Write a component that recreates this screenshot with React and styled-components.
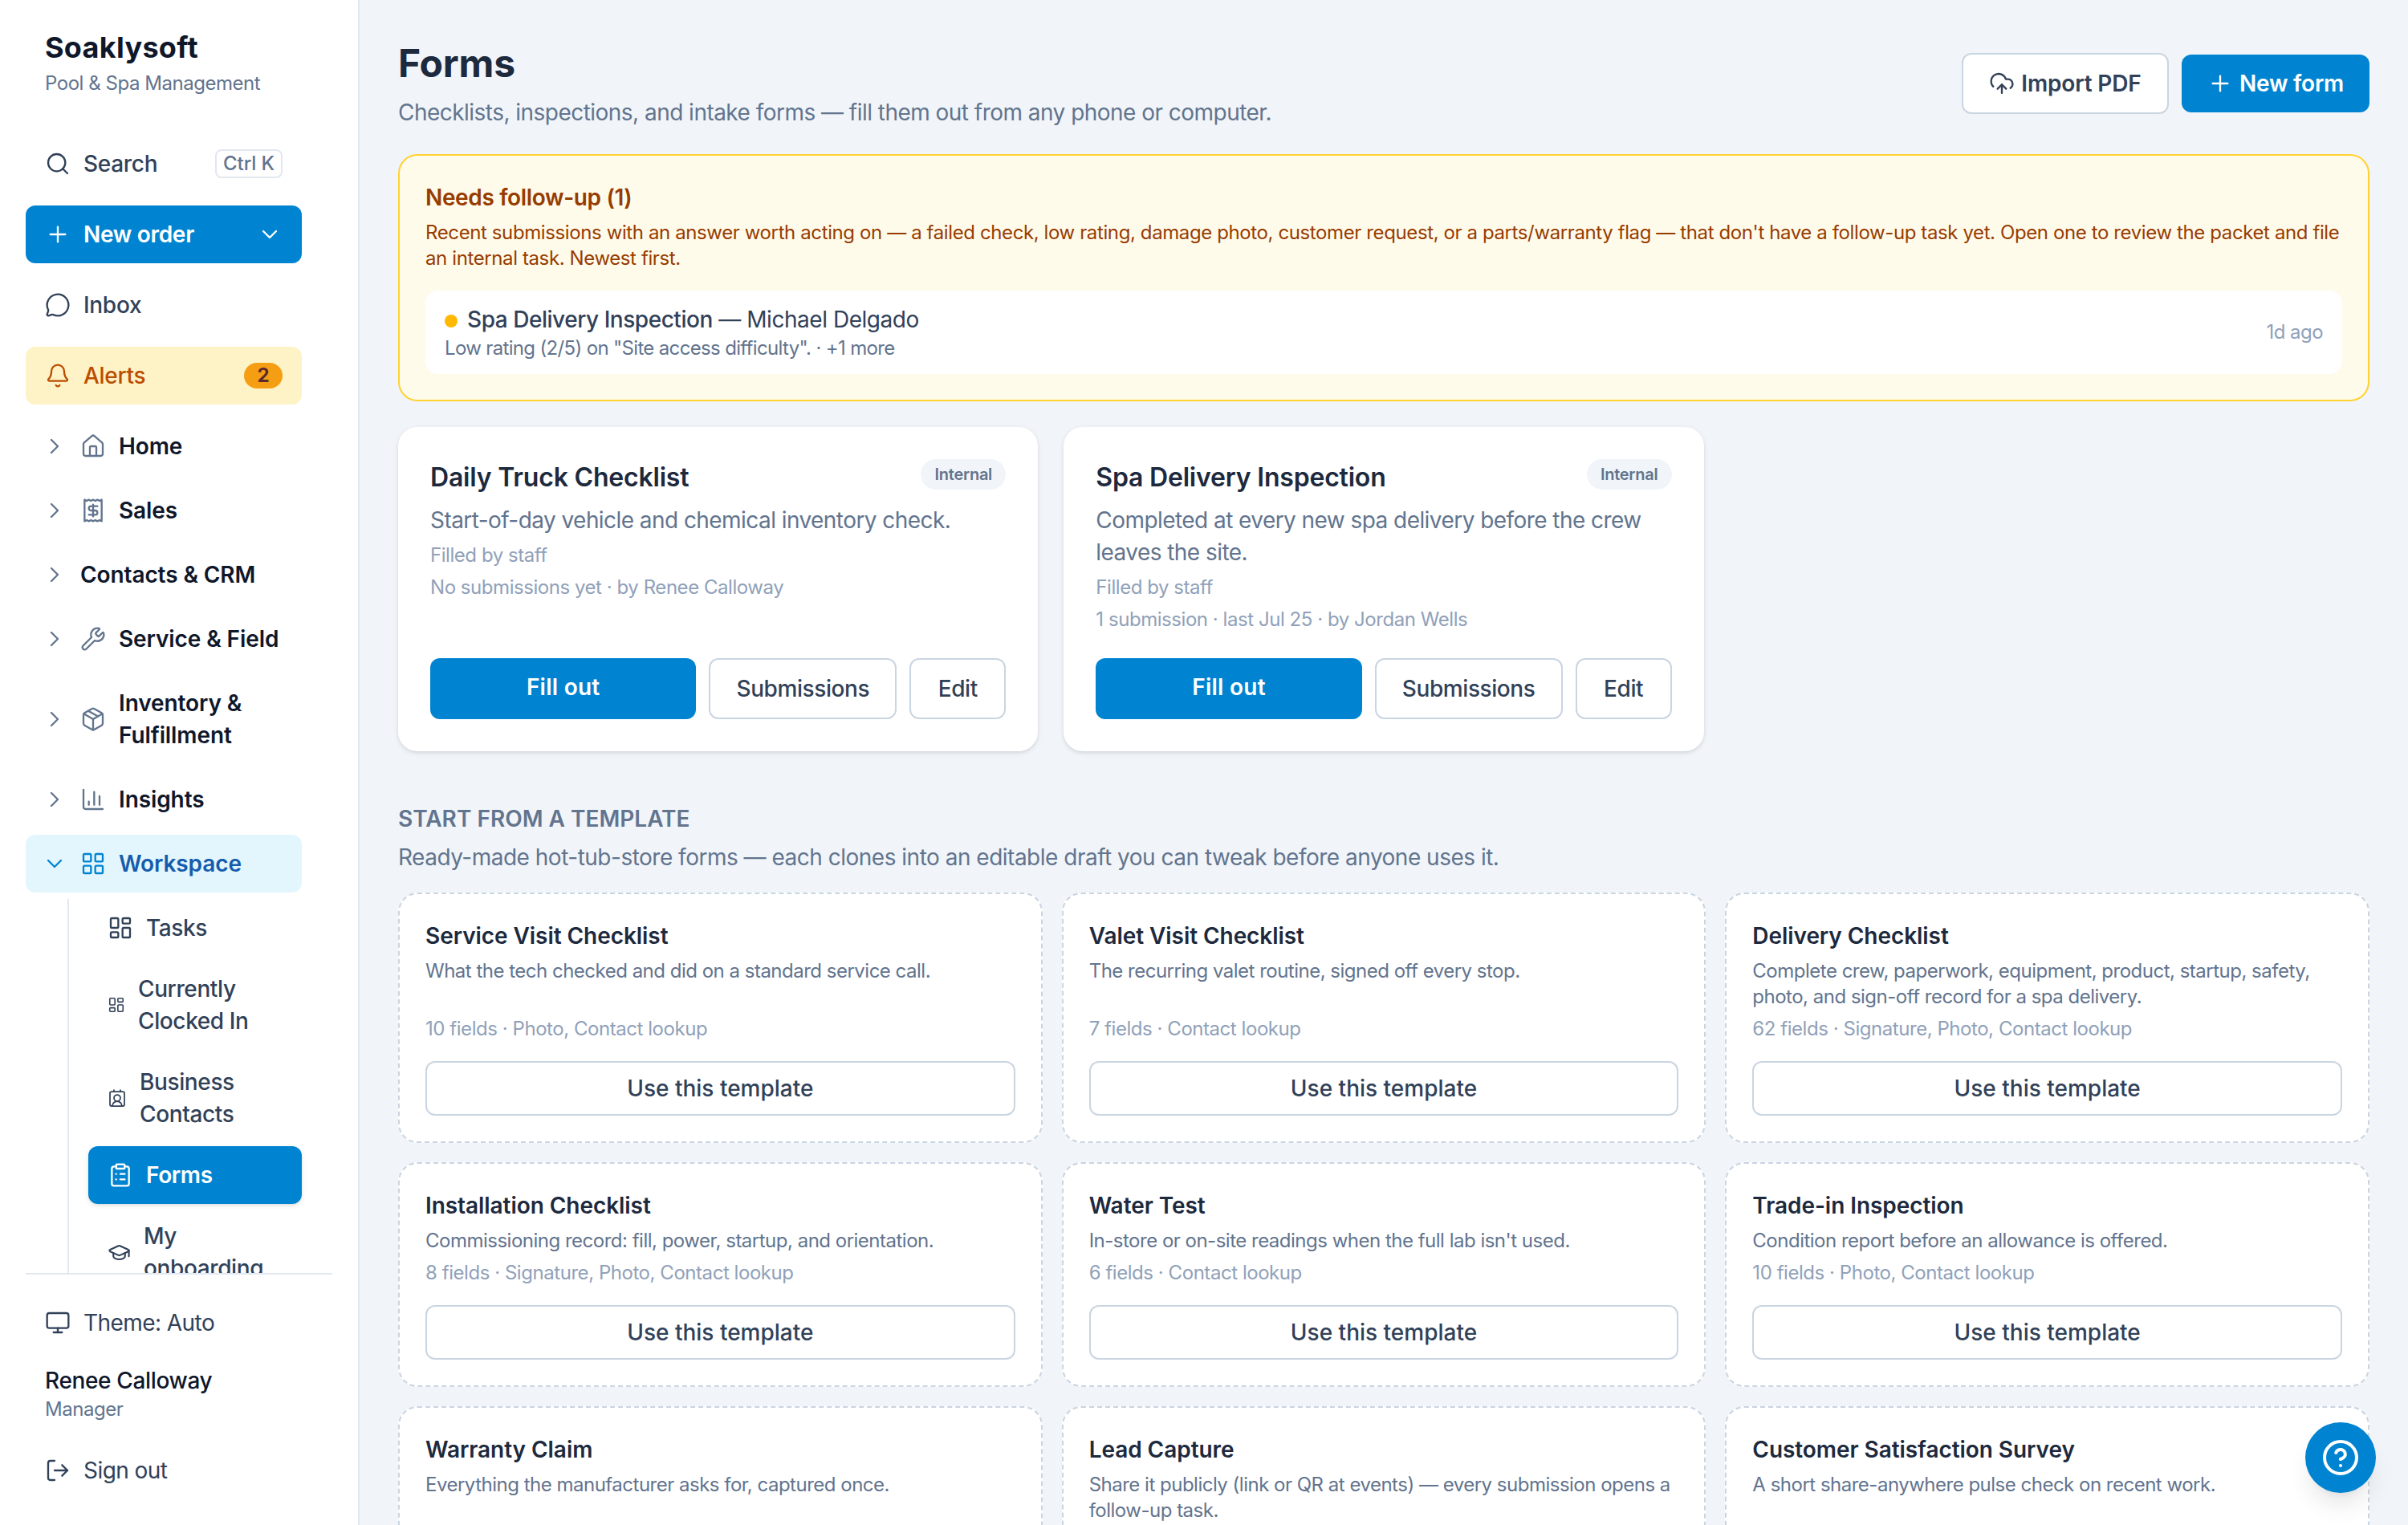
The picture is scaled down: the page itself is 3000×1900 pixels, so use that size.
import React from "react";
import styled, { createGlobalStyle, css } from "styled-components";
import {
  Bell,
  ChartColumn,
  ChevronDown,
  ChevronRight,
  CircleQuestionMark,
  ClipboardList,
  CloudUpload,
  ContactRound,
  GraduationCap,
  House,
  LayoutDashboard,
  LayoutGrid,
  LogOut,
  MessageCircle,
  Monitor,
  Package,
  Plus,
  Receipt,
  Search,
  Wrench,
} from "lucide-react";

const GlobalStyle = createGlobalStyle`
  * {
    box-sizing: border-box;
  }
  body {
    margin: 0;
    background: #f1f5f9;
    color: #1d293d;
    font-family: Inter, "Liberation Sans", sans-serif;
    font-size: 28px;
    line-height: 40px;
    letter-spacing: -0.56px;
  }
  h1, h2, h3, p {
    margin: 0;
  }
  button {
    font: inherit;
    letter-spacing: inherit;
    margin: 0;
  }
  svg {
    display: block;
  }
`;

const groups = [
  { label: "Home", icon: House },
  { label: "Sales", icon: Receipt },
  { label: "Contacts & CRM" },
  { label: "Service & Field", icon: Wrench },
  { label: "Inventory & Fulfillment", icon: Package },
  { label: "Insights", icon: ChartColumn },
  { label: "Workspace", icon: LayoutGrid, open: true },
];

const subItems = [
  { label: "Tasks", icon: LayoutDashboard, size: 32 },
  { label: "Currently Clocked In", icon: LayoutDashboard, size: 22 },
  { label: "Business Contacts", icon: ContactRound, size: 24 },
  { label: "Forms", icon: ClipboardList, size: 32, active: true },
  { label: "My onboarding", icon: GraduationCap, size: 29 },
];

const forms = [
  {
    title: "Daily Truck Checklist",
    text: "Start-of-day vehicle and chemical inventory check.",
    meta: "No submissions yet · by Renee Calloway",
  },
  {
    title: "Spa Delivery Inspection",
    text: "Completed at every new spa delivery before the crew leaves the site.",
    meta: "1 submission · last Jul 25 · by Jordan Wells",
  },
];

const templates = [
  {
    title: "Service Visit Checklist",
    text: "What the tech checked and did on a standard service call.",
    meta: "10 fields · Photo, Contact lookup",
  },
  {
    title: "Valet Visit Checklist",
    text: "The recurring valet routine, signed off every stop.",
    meta: "7 fields · Contact lookup",
  },
  {
    title: "Delivery Checklist",
    text: "Complete crew, paperwork, equipment, product, startup, safety, photo, and sign-off record for a spa delivery.",
    meta: "62 fields · Signature, Photo, Contact lookup",
  },
  {
    title: "Installation Checklist",
    text: "Commissioning record: fill, power, startup, and orientation.",
    meta: "8 fields · Signature, Photo, Contact lookup",
  },
  {
    title: "Water Test",
    text: "In-store or on-site readings when the full lab isn't used.",
    meta: "6 fields · Contact lookup",
  },
  {
    title: "Trade-in Inspection",
    text: "Condition report before an allowance is offered.",
    meta: "10 fields · Photo, Contact lookup",
  },
  {
    title: "Warranty Claim",
    text: "Everything the manufacturer asks for, captured once.",
    meta: "12 fields · Photo, Contact lookup",
  },
  {
    title: "Lead Capture",
    text: "Share it publicly (link or QR at events) — every submission opens a follow-up task.",
    meta: "6 fields · Contact lookup",
  },
  {
    title: "Customer Satisfaction Survey",
    text: "A short share-anywhere pulse check on recent work.",
    meta: "5 fields",
  },
];

function Sidebar() {
  return (
    <Aside>
      <Brand>
        <BrandName>Soaklysoft</BrandName>
        <Small>Pool &amp; Spa Management</Small>
      </Brand>

      <Nav>
        <QuickLinks>
          <NavRow>
            <Search size={32} strokeWidth={1.75} />
            <Grow>Search</Grow>
            <Kbd>Ctrl K</Kbd>
          </NavRow>
          <NavRow $variant="primary">
            <Plus size={32} strokeWidth={1.75} />
            <Grow>New order</Grow>
            <ChevronDown size={32} strokeWidth={1.75} />
          </NavRow>
          <NavRow>
            <MessageCircle size={32} strokeWidth={1.75} />
            <Grow>Inbox</Grow>
          </NavRow>
          <NavRow $variant="alert">
            <Bell size={32} strokeWidth={1.75} />
            <Grow>Alerts</Grow>
            <Count>2</Count>
          </NavRow>
        </QuickLinks>

        <Groups>
          {groups.map(({ label, icon: Icon, open }) => (
            <GroupRow key={label} $open={open}>
              {open ? (
                <ChevronDown size={32} strokeWidth={1.75} />
              ) : (
                <ChevronRight size={32} strokeWidth={1.75} />
              )}
              {Icon && <Icon size={32} strokeWidth={1.75} />}
              <span>{label}</span>
            </GroupRow>
          ))}
        </Groups>

        <SubList>
          {subItems.map(({ label, icon: Icon, size, active }) => (
            <SubRow key={label} $active={active}>
              <Icon size={size} strokeWidth={1.75} />
              <span>{label}</span>
            </SubRow>
          ))}
        </SubList>
      </Nav>

      <Footer>
        <NavRow $regular>
          <Monitor size={32} strokeWidth={1.75} />
          <Grow>Theme: Auto</Grow>
        </NavRow>
        <User>
          <UserName>Renee Calloway</UserName>
          <Small>Manager</Small>
        </User>
        <NavRow $regular>
          <LogOut size={32} strokeWidth={1.75} />
          <Grow>Sign out</Grow>
        </NavRow>
      </Footer>
    </Aside>
  );
}

function App() {
  return (
    <Page>
      <GlobalStyle />
      <Sidebar />
      <Main>
        <Header>
          <div>
            <Title>Forms</Title>
            <Lead>
              Checklists, inspections, and intake forms — fill them out from any
              phone or computer.
            </Lead>
          </div>
          <Actions>
            <ImportButton $width={258}>
              <CloudUpload size={32} strokeWidth={1.75} />
              Import PDF
            </ImportButton>
            <PrimaryButton>
              <Plus size={32} strokeWidth={1.75} />
              New form
            </PrimaryButton>
          </Actions>
        </Header>

        <FollowUp>
          <FollowTitle>Needs follow-up (1)</FollowTitle>
          <FollowText>
            Recent submissions with an answer worth acting on — a failed check,
            low rating, damage photo, customer request, or a parts/warranty flag
            — that don't have a follow-up task yet. Open one to review the
            packet and file an internal task. Newest first.
          </FollowText>
          <FollowItem>
            <div>
              <ItemTitle>
                <Dot />
                <span>
                  <b>Spa Delivery Inspection</b> — Michael Delgado
                </span>
              </ItemTitle>
              <ItemReason>
                Low rating (2/5) on "Site access difficulty". · +1 more
              </ItemReason>
            </div>
            <Meta>1d ago</Meta>
          </FollowItem>
        </FollowUp>

        <FormGrid>
          {forms.map((form) => (
            <FormCard key={form.title}>
              <CardTop>
                <CardTitle>{form.title}</CardTitle>
                <Tag>Internal</Tag>
              </CardTop>
              <CardText>{form.text}</CardText>
              <CardMeta>Filled by staff</CardMeta>
              <CardMeta>{form.meta}</CardMeta>
              <CardButtons>
                <FillButton>Fill out</FillButton>
                <Button $width={234}>Submissions</Button>
                <Button $width={120}>Edit</Button>
              </CardButtons>
            </FormCard>
          ))}
        </FormGrid>

        <SectionTitle>Start from a template</SectionTitle>
        <SectionText>
          Ready-made hot-tub-store forms — each clones into an editable draft
          you can tweak before anyone uses it.
        </SectionText>
        <TemplateGrid>
          {templates.map((item) => (
            <TemplateCard key={item.title}>
              <TemplateTitle>{item.title}</TemplateTitle>
              <TemplateText>{item.text}</TemplateText>
              <CardMeta>{item.meta}</CardMeta>
              <TemplateButton>Use this template</TemplateButton>
            </TemplateCard>
          ))}
        </TemplateGrid>
      </Main>
      <HelpButton>
        <CircleQuestionMark size={48} strokeWidth={2} />
      </HelpButton>
    </Page>
  );
}

const Page = styled.div`
  display: flex;
  width: 3000px;
  height: 1900px;
  overflow: hidden;
`;

const Aside = styled.aside`
  display: flex;
  flex-direction: column;
  flex: none;
  width: 448px;
  height: 1900px;
  padding: 32px;
  border-right: 2px solid #e2e8f0;
  background: #ffffff;
`;

const Brand = styled.div`
  height: 136px;
  flex: none;
  padding-left: 24px;
`;

const BrandName = styled.div`
  color: #0f172b;
  font-size: 36px;
  font-weight: 700;
  line-height: 54px;
  letter-spacing: 0.3px;
  margin-bottom: 2px;
`;

const Small = styled.div`
  color: #62748e;
  font-size: 24px;
  line-height: 32px;
  letter-spacing: -0.46px;
`;

const Nav = styled.nav`
  flex: 1;
  min-height: 0;
  padding-right: 38px;
  overflow: hidden;
`;

const QuickLinks = styled.div`
  display: flex;
  flex-direction: column;
  gap: 16px;
`;

const NavRow = styled.div`
  display: flex;
  align-items: center;
  gap: 16px;
  height: 72px;
  padding: 0 24px;
  border-radius: 12px;
  color: #314158;
  font-weight: ${(p) => (p.$regular ? 400 : 500)};
  letter-spacing: ${(p) => (p.$regular ? "-0.56px" : "-0.3px")};

  ${(p) =>
    p.$variant === "primary" &&
    css`
      background: #0084d1;
      color: #ffffff;
      font-weight: 600;
    `}

  ${(p) =>
    p.$variant === "alert" &&
    css`
      background: #fef3c6;
      color: #bb4d00;
    `}
`;

const Grow = styled.span`
  flex: 1;
`;

const Kbd = styled.span`
  display: flex;
  align-items: center;
  justify-content: center;
  width: 84px;
  height: 36px;
  border: 2px solid #e2e8f0;
  border-radius: 8px;
  color: #62748e;
  font-size: 24px;
  font-weight: 500;
  letter-spacing: -0.1px;
`;

const Count = styled.span`
  width: 48px;
  border-radius: 16px;
  background: #f59e14;
  color: #5c2a2e;
  font-size: 24px;
  font-weight: 700;
  line-height: 32px;
  text-align: center;
`;

const Groups = styled.div`
  display: flex;
  flex-direction: column;
  gap: 8px;
  margin-top: 16px;
`;

const GroupRow = styled.div`
  display: flex;
  align-items: center;
  gap: 16px;
  padding: 16px 20px;
  border-radius: 12px;
  background: ${(p) => (p.$open ? "#e4f6fd" : "transparent")};
  color: ${(p) => (p.$open ? "#155dac" : "#0f172b")};
  font-weight: 600;
  letter-spacing: -0.1px;

  svg {
    flex: none;
    color: ${(p) => (p.$open ? "#0084d1" : "#62748e")};
  }
`;

const SubList = styled.div`
  display: flex;
  flex-direction: column;
  gap: 4px;
  margin: 8px 0 0 52px;
  padding-left: 24px;
  border-left: 2px solid #e2e8f0;
`;

const SubRow = styled.div`
  display: flex;
  align-items: center;
  gap: 16px;
  padding: 16px 24px;
  border-radius: 12px;
  color: ${(p) => (p.$active ? "#ffffff" : "#314158")};
  background: ${(p) => (p.$active ? "#0084d1" : "transparent")};
  box-shadow: ${(p) =>
    p.$active ? "0 2px 6px rgba(0, 0, 0, 0.1), 0 2px 4px -2px rgba(0, 0, 0, 0.1)" : "none"};
  font-weight: ${(p) => (p.$active ? 600 : 500)};
  letter-spacing: -0.38px;

  svg {
    flex: none;
  }
`;

const Footer = styled.div`
  flex: none;
  padding-top: 24px;
  border-top: 2px solid #e2e8f0;
`;

const User = styled.div`
  padding: 16px 24px 24px;
`;

const UserName = styled.div`
  color: #0f172b;
  font-weight: 500;
  letter-spacing: -0.35px;
`;

const Main = styled.main`
  flex: 1;
  min-width: 0;
  padding: 48px;
`;

const Header = styled.header`
  display: flex;
  justify-content: space-between;
  height: 144px;
`;

const Title = styled.h1`
  padding-bottom: 2px;
  font-size: 48px;
  font-weight: 700;
  line-height: 62px;
  letter-spacing: -0.2px;
`;

const Lead = styled.p`
  margin-top: 8px;
  color: #62748e;
  letter-spacing: -0.53px;
`;

const Actions = styled.div`
  display: flex;
  align-items: center;
  align-self: flex-start;
  gap: 16px;
  height: 112px;
`;

const buttonBase = css`
  display: flex;
  align-items: center;
  justify-content: center;
  gap: 8px;
  padding: 0;
  border-radius: 12px;
  white-space: nowrap;
`;

const Button = styled.button`
  ${buttonBase}
  width: ${(p) => p.$width}px;
  height: 76px;
  border: 2px solid #cad5e2;
  background: #ffffff;
  color: #314158;
  font-weight: 500;
  letter-spacing: -0.42px;
`;

const ImportButton = styled(Button)`
  font-weight: 600;
  letter-spacing: -0.15px;
`;

const PrimaryButton = styled.button`
  ${buttonBase}
  width: 234px;
  height: 72px;
  border: none;
  background: #0084d1;
  color: #ffffff;
  font-weight: 600;
  letter-spacing: -0.2px;
`;

const FollowUp = styled.section`
  height: 308px;
  padding: 32px;
  border: 2px solid #ffd230;
  border-radius: 24px;
  background: #fffbeb;
  color: #973c00;
`;

const FollowTitle = styled.h2`
  font-size: 28px;
  font-weight: 600;
  line-height: 40px;
  letter-spacing: -0.35px;
`;

const FollowText = styled.p`
  margin-top: 8px;
  font-size: 24px;
  line-height: 32px;
  letter-spacing: -0.39px;
`;

const FollowItem = styled.div`
  display: flex;
  align-items: center;
  justify-content: space-between;
  margin-top: 24px;
  padding: 16px 24px;
  border-radius: 16px;
  background: #ffffff;
`;

const ItemTitle = styled.div`
  display: flex;
  align-items: center;
  gap: 12px;
  color: #314158;
  letter-spacing: -0.46px;

  b {
    font-weight: 500;
  }
`;

const ItemReason = styled(Small)`
  letter-spacing: -0.66px;
`;

const Dot = styled.span`
  width: 16px;
  height: 16px;
  margin-top: 4px;
  border-radius: 50%;
  background: #ffb900;
`;

const Meta = styled.div`
  color: #90a1b9;
  font-size: 24px;
  line-height: 32px;
`;

const FormGrid = styled.div`
  display: grid;
  grid-template-columns: repeat(3, 1fr);
  gap: 32px;
  margin-top: 32px;
`;

const FormCard = styled.article`
  display: flex;
  flex-direction: column;
  height: 404px;
  padding: 40px;
  border-radius: 24px;
  background: #ffffff;
  box-shadow: 0 2px 6px rgba(0, 0, 0, 0.1), 0 2px 4px -2px rgba(0, 0, 0, 0.1);
`;

const CardTop = styled.div`
  display: flex;
  align-items: flex-start;
  justify-content: space-between;
`;

const CardTitle = styled.h2`
  padding-top: 2px;
  font-size: 32px;
  font-weight: 600;
  line-height: 42px;
  letter-spacing: -0.2px;
`;

const Tag = styled.span`
  width: 106px;
  border-radius: 19px;
  background: #f1f5f9;
  color: #62748e;
  font-size: 20px;
  font-weight: 600;
  line-height: 38px;
  letter-spacing: -0.25px;
  text-align: center;
`;

const CardText = styled.p`
  margin-top: 12px;
  color: #62748e;
`;

const CardMeta = styled.p`
  margin-top: 8px;
  color: #90a1b9;
  font-size: 24px;
  line-height: 32px;
  letter-spacing: -0.45px;
`;

const CardButtons = styled.div`
  display: flex;
  gap: 16px;
  margin-top: auto;
`;

const FillButton = styled.button`
  flex: 1;
  padding: 0 0 4px;
  border: none;
  border-radius: 12px;
  background: #0084d1;
  color: #ffffff;
  font-weight: 600;
  letter-spacing: 0.25px;
`;

const SectionTitle = styled.h2`
  margin-top: 64px;
  color: #62748e;
  font-size: 28px;
  font-weight: 600;
  line-height: 40px;
  letter-spacing: 0;
  text-transform: uppercase;
`;

const SectionText = styled.p`
  margin-top: 8px;
  color: #62748e;
  letter-spacing: -0.5px;
`;

const TemplateGrid = styled.div`
  display: grid;
  grid-template-columns: repeat(3, 1fr);
  gap: 24px;
  margin-top: 24px;
`;

const TemplateCard = styled.article`
  display: flex;
  flex-direction: column;
  padding: 32px;
  border: 2px dashed #cad5e2;
  border-radius: 24px;
  background: #ffffff;
`;

const TemplateTitle = styled.h3`
  font-size: 28px;
  font-weight: 600;
  line-height: 40px;
  letter-spacing: -0.06px;
`;

const TemplateText = styled.p`
  flex: 1;
  margin-top: 8px;
  color: #62748e;
  font-size: 24px;
  line-height: 32px;
  letter-spacing: -0.5px;
`;

const TemplateButton = styled.button`
  ${buttonBase}
  height: 68px;
  margin-top: 24px;
  border: 2px solid #cad5e2;
  background: #ffffff;
  color: #314158;
  font-weight: 500;
  letter-spacing: 0;
`;

const HelpButton = styled.button`
  position: fixed;
  right: 40px;
  bottom: 40px;
  display: flex;
  align-items: center;
  justify-content: center;
  width: 88px;
  height: 88px;
  padding: 0;
  border: none;
  border-radius: 50%;
  background: #0084d1;
  color: #ffffff;
  box-shadow: 0 20px 30px -6px rgba(0, 0, 0, 0.1), 0 8px 12px -8px rgba(0, 0, 0, 0.1);
`;

export default App;
